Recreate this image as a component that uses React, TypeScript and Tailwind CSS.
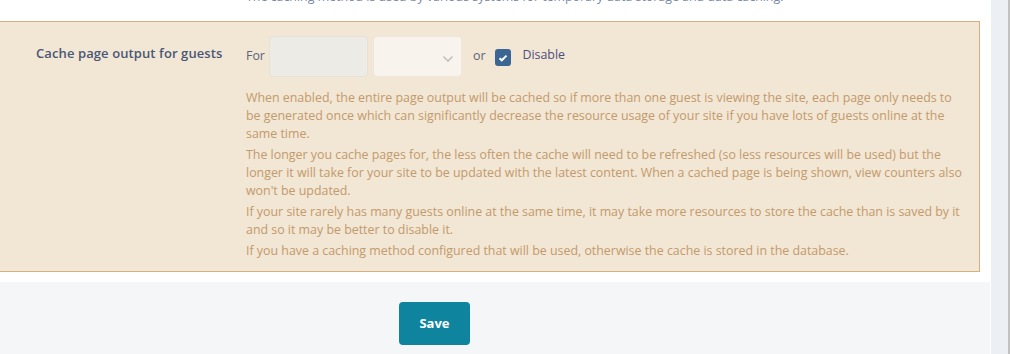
import React from "react";

const font = { fontFamily: '"Open Sans", "Noto Sans", sans-serif' };

export default function App() {
  return (
    <div className="flex w-[1010px] h-[354px] overflow-hidden bg-white" style={font}>
      <div className="w-[991px] flex flex-col bg-white">
        {/* top cut-off text */}
        <div className="h-[21px] overflow-hidden pl-[246px]">
          <div className="text-[12.4px] leading-[18px] text-[#7b87aa] mt-[-12px] whitespace-nowrap">
            The caching method is used by various systems for temporary data storage and data caching.
          </div>
        </div>
        {/* panel */}
        <div className="w-[980px] h-[251px] border-y border-r border-[#d5b07f] bg-[#f2e6d5] flex">
          <div className="w-[246px] shrink-0 pl-[36px] pt-[22px]">
            <div className="text-[13px] font-semibold leading-[18px] text-[#4a5876] tracking-[0.1px]">
              Cache page output for guests
            </div>
          </div>
          <div className="flex flex-col pt-[14px]">
            <div className="flex items-center h-[41px]">
              <span className="text-[12.4px] text-[#5b6479] mr-[4px]">For</span>
              <div className="w-[99px] h-[41px] rounded-[4px] bg-[#ecebe6] border border-[#e6e2da]" />
              <div className="ml-[5px] w-[89px] h-[41px] rounded-[4px] bg-[#f8f3ec] border border-[#efe7dc] flex items-center justify-end pr-[7px]">
                <svg width="12" height="8" viewBox="0 0 12 8" className="mt-[4px]">
                  <path d="M1.5 1.5 L6 6 L10.5 1.5" fill="none" stroke="#c4c1bc" strokeWidth="1.6" />
                </svg>
              </div>
              <span className="ml-[11px] text-[12.4px] text-[#5b6479]">or</span>
              <div className="ml-[10px] w-[16px] h-[17px] rounded-[3px] bg-[#3b6593] flex items-center justify-center mt-[2px]">
                <svg width="10" height="8" viewBox="0 0 10 8">
                  <path d="M1.5 4.2 L3.8 6.3 L8.5 1.6" fill="none" stroke="#ffffff" strokeWidth="2" />
                </svg>
              </div>
              <span className="ml-[11px] text-[12.4px] text-[#4d4f7e] mt-[-2px]">Disable</span>
            </div>
            <div className="mt-[12px] text-[12.4px] leading-[18px] text-[#c29a6b] whitespace-nowrap">
              <p>
                When enabled, the entire page output will be cached so if more than one guest is viewing the site, each page only needs to
                <br />
                be generated once which can significantly decrease the resource usage of your site if you have lots of guests online at the
                <br />
                same time.
              </p>
              <p className="mt-[3px]">
                The longer you cache pages for, the less often the cache will need to be refreshed (so less resources will be used) but the
                <br />
                longer it will take for your site to be updated with the latest content. When a cached page is being shown, view counters also
                <br />
                won't be updated.
              </p>
              <p className="mt-[3px]">
                If your site rarely has many guests online at the same time, it may take more resources to store the cache than is saved by it
                <br />
                and so it may be better to disable it.
              </p>
              <p className="mt-[3px]">
                If you have a caching method configured that will be used, otherwise the cache is stored in the database.
              </p>
            </div>
          </div>
        </div>
        {/* footer */}
        <div className="mt-[10px] flex-1 bg-[#f5f6f8] w-[990px] pt-[20px] pl-[399px]">
          <button className="w-[71px] h-[43px] rounded-[4px] bg-[#0e849e] text-white text-[13px] font-bold">
            Save
          </button>
        </div>
      </div>
      <div className="w-[19px] bg-[#eceff4] border-r-2 border-[#c1c1c1]" />
    </div>
  );
}
